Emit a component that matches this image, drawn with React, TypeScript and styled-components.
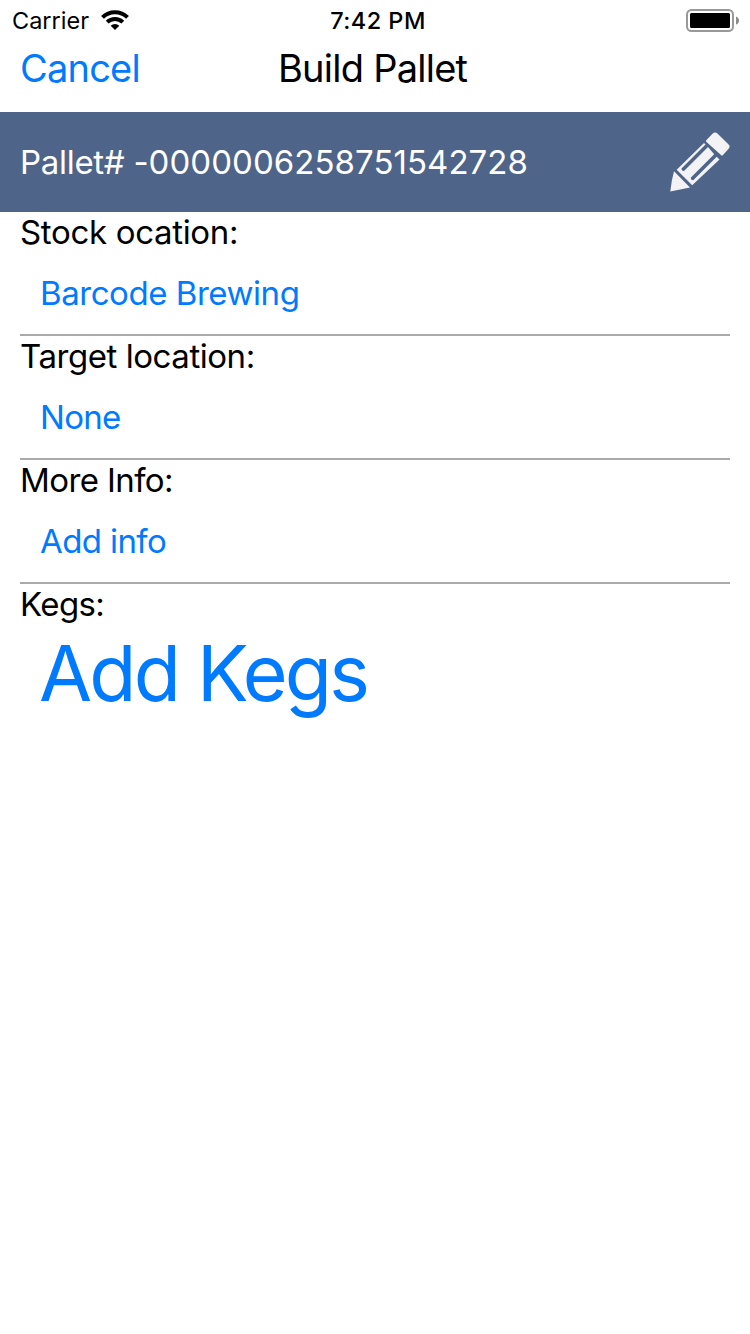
import React from "react";
import styled, { createGlobalStyle } from "styled-components";

const Global = createGlobalStyle`
  body { margin: 0; background: #fff; font-family: Inter, "Liberation Sans", sans-serif; color: #000; }
  * { box-sizing: border-box; }
`;

const Screen = styled.main`
  width: 750px;
  height: 1334px;
  background: #fff;
  overflow: hidden;
`;

const StatusBar = styled.div`
  height: 40px;
  display: grid;
  grid-template-columns: 1fr auto 1fr;
  align-items: center;
  padding: 0 10px 0 12px;
  font-size: 23.5px;
  line-height: 38px;
`;

const Carrier = styled.div`
  display: flex;
  align-items: center;
  gap: 11px;
`;

const CarrierName = styled.span`
  width: 78px;
  padding-top: 2px;
  white-space: nowrap;
`;

const Clock = styled.time`
  padding: 2px 0 0 4px;
  font-weight: 550;
  letter-spacing: 0.45px;
`;

const Battery = styled.svg`
  justify-self: end;
`;

const NavBar = styled.header`
  height: 72px;
  display: grid;
  grid-template-columns: 258px 1fr;
  align-items: start;
  padding: 3px 20px 0;
  font-size: 38px;
  line-height: 50px;
`;

const LinkButton = styled.button<{ $size: number; $spacing: number }>`
  display: block;
  border: 0;
  padding: 0;
  background: none;
  color: #007aff;
  font: inherit;
  font-size: ${(p) => p.$size}px;
  letter-spacing: ${(p) => p.$spacing}px;
  text-align: left;
  white-space: nowrap;
`;

const Title = styled.h1`
  margin: 0;
  font: inherit;
  letter-spacing: -0.75px;
`;

const PalletBar = styled.section`
  height: 100px;
  display: flex;
  align-items: center;
  justify-content: space-between;
  padding: 0 20px;
  background: #4f6489;
  color: #fff;
  font-size: 33px;
`;

const PalletTitle = styled.div`
  letter-spacing: -0.3px;
`;

const PalletNumber = styled.span`
  letter-spacing: 0.04px;
`;

const Field = styled.section`
  height: 124px;
  margin: 0 20px;
  border-bottom: 2px solid #aaa;
`;

const Label = styled.div<{ $spacing: number }>`
  height: 41px;
  font-size: 33px;
  line-height: 41px;
  letter-spacing: ${(p) => p.$spacing}px;
`;

const Value = styled.div`
  padding: 20px 20px 0;
  line-height: 41px;
`;

const Kegs = styled.section`
  margin: 0 20px;
`;

const KegsAction = styled.div`
  padding: 0 19px;
  line-height: 96px;
`;

const fields = [
  { label: "Stock ocation:", labelSpacing: -0.33, value: "Barcode Brewing", valueSpacing: -0.45 },
  { label: "Target location:", labelSpacing: -0.45, value: "None", valueSpacing: -0.7 },
  { label: "More Info:", labelSpacing: -0.6, value: "Add info", valueSpacing: -0.6 },
];

export default function App() {
  return (
    <Screen>
      <Global />
      <StatusBar>
        <Carrier>
          <CarrierName>Carrier</CarrierName>
          <svg width="28" height="22" viewBox="0 0 28 22">
            <g fill="none" stroke="#000" strokeWidth="4">
              <path d="M1.5 8.3a17.7 17.7 0 0 1 25 0" />
              <path d="M6.2 13.1a11.3 11.3 0 0 1 15.6 0" />
            </g>
            <path d="M14 21l-4.3-4.2a6.1 6.1 0 0 1 8.6 0z" />
          </svg>
        </Carrier>
        <Clock>7:42 PM</Clock>
        <Battery width="54" height="24" viewBox="0 0 54 24">
          <rect x="1" y="2" width="46" height="21" rx="4.5" fill="none" stroke="#999" strokeWidth="2" />
          <rect x="4" y="5" width="40" height="15" rx="1.5" />
          <path d="M50 8.5q3 1 3 4t-3 4z" fill="#8c8c8c" />
        </Battery>
      </StatusBar>
      <NavBar>
        <LinkButton $size={38} $spacing={-0.8}>Cancel</LinkButton>
        <Title>Build Pallet</Title>
      </NavBar>
      <PalletBar>
        <PalletTitle>
          Pallet# <PalletNumber>-0000006258751542728</PalletNumber>
        </PalletTitle>
        <svg width="60" height="60" viewBox="0 0 60 60" fill="#f3f3f6">
          <path d="M36.5 8L42.5 1.8q2.5-2.5 5.2 0L58.6 12.4q2 2.2 0 4.4L53 23q-1 1-2 0L36.5 10q-1-1 0-2z" />
          <path d="M34 11L35.5 12.5L11.5 36.5Q11.5 39 14 39L38 15L44.2 22.2L20.7 45.7Q20.8 48.2 23.2 48.2L46.7 24.7L49.5 27.5L22.2 53.2L6.7 37.7z" />
          <path d="M4 39.2L20 55.5Q10 57.5 0.3 59.6Q1.3 49 4 39.2z" />
        </svg>
      </PalletBar>
      {fields.map((f) => (
        <Field key={f.label}>
          <Label $spacing={f.labelSpacing}>{f.label}</Label>
          <Value><LinkButton $size={33} $spacing={f.valueSpacing}>{f.value}</LinkButton></Value>
        </Field>
      ))}
      <Kegs>
        <Label $spacing={-0.6}>Kegs:</Label>
        <KegsAction><LinkButton $size={77} $spacing={-2.8}>Add Kegs</LinkButton></KegsAction>
      </Kegs>
    </Screen>
  );
}
